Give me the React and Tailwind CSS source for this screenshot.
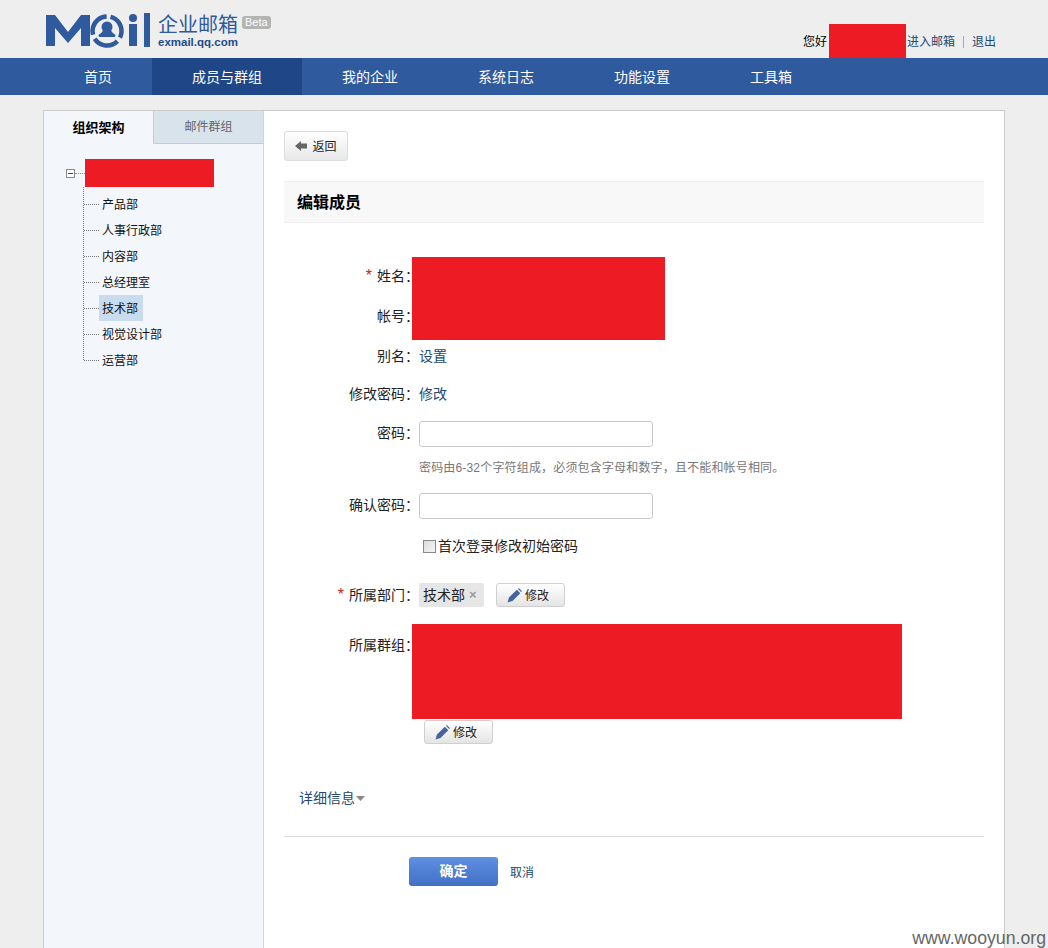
import React from 'react';

const FONT = "font-['Liberation_Sans','Noto_Sans_CJK_SC',sans-serif]";

const navItems = ['首页', '成员与群组', '我的企业', '系统日志', '功能设置', '工具箱'];
const departments = ['产品部', '人事行政部', '内容部', '总经理室', '技术部', '视觉设计部', '运营部'];

const Logo = () => (
  <svg width="106" height="36" viewBox="0 0 106 36" className="block overflow-visible">
    <polygon points="0,33 0,2 9,2 22,19 35,2 44,2 44,33 35,33 35,15 22,30 9,15 9,33" fill="#2f5a9e" />
    <circle
      cx="61"
      cy="18"
      r="14.500"
      fill="none"
      stroke="#2f5a9e"
      strokeWidth="4.500"
      strokeDasharray="26 4.300"
      transform="rotate(-76 61 18)"
    />
    <circle cx="61" cy="14" r="5.500" fill="#2f5a9e" />
    <path d="M57 17h8c.5 2 2.500 3.500 4 4.500 1 .7.5 2.500-1 2.500H54c-1.500 0-2-1.800-1-2.500 1.500-1 3.500-2.500 4-4.500z" fill="#2f5a9e" />
    <circle cx="87" cy="5" r="4" fill="#2f5a9e" />
    <rect x="83" y="11" width="8" height="22" fill="#2f5a9e" />
    <rect x="98" y="0" width="6" height="34" fill="#2f5a9e" />
  </svg>
);

const PencilIcon = () => (
  <svg width="15" height="15" viewBox="0 0 15 15" className="block">
    <polygon points="0.500,14.500 2,9.500 9.800,1.700 13.300,5.200 5.500,13" fill="#46639b" />
    <polygon points="10.800,0.700 12,0.200 14.800,3 14.300,4.200" fill="#46639b" />
  </svg>
);

const EditButton = () => (
  <button className="flex h-[24px] w-[69px] items-center gap-[3px] rounded-[3px] border border-[#d0d0d0] bg-linear-to-b from-white to-[#e4e4e4] pl-[10px] text-[12px] text-[#222]">
    <PencilIcon />
    <span className="pt-px">修改</span>
  </button>
);

const Label = ({ required, children }) => (
  <div className="w-[135px] shrink-0 text-right text-[14px] leading-[20px] text-[#222]">
    {required && <span className="mr-[5px] text-[16px] leading-none text-[#d02020]">*</span>}
    {children}：
  </div>
);

const Input = () => (
  <input type="text" className="h-[26px] w-[234px] rounded-[3px] border border-[#c8c8c8] bg-white" />
);

const App = () => {
  return (
    <div className={`${FONT} relative h-[948px] w-[1048px] overflow-hidden bg-[#eeeeee]`}>
      <header className="flex h-[58px] items-start pl-[46px]">
        <div className="mt-[13px]">
          <Logo />
        </div>
        <div className="ml-[6px] mt-[13px] flex w-[84px] flex-col">
          <span className="text-[20px] leading-[24px] text-[#2f5a9e]">企业邮箱</span>
          <span className="text-[11.500px] font-bold leading-[11px] text-[#1f4a8c]">exmail.qq.com</span>
        </div>
        <span className="mt-[16px] rounded-[3px] bg-[#b4b4b4] px-[3px] text-[11px] leading-[13px] text-white">Beta</span>
        <div className="ml-auto mr-[52px] mt-[24px] flex h-[34px] items-center text-[12px]">
          <span className="mt-[2px] text-black">您好</span>
          <div className="ml-[2px] h-[34px] w-[77px] bg-[#ed1c24]" />
          <a className="ml-[1px] mt-[2px] text-[#24496e]">进入邮箱</a>
          <span className="mx-[8px] mt-[2px] h-[12px] w-px bg-[#aaaaaa]" />
          <a className="mt-[2px] text-[#24496e]">退出</a>
        </div>
      </header>

      <nav className="flex h-[37px] bg-[#2f5a9e] pl-[44px]">
        {navItems.map((item) => (
          <a
            key={item}
            className={`flex items-center px-10 pt-px text-[14px] text-white ${item === '成员与群组' ? 'bg-[#1f4788]' : ''}`}
          >
            {item}
          </a>
        ))}
      </nav>

      <main className="ml-[43px] mt-[15px] flex h-[838px] w-[962px] border border-b-0 border-[#cccccc] bg-white">
        <aside className="w-[220px] shrink-0 border-r border-[#d4d4d4] bg-[#f3f7fb]">
          <div className="flex h-[33px]">
            <div className="flex w-[109px] items-center justify-center text-[13px] font-bold text-black">组织架构</div>
            <div className="flex w-[110px] items-center justify-center rounded-bl-[2px] border-b border-l border-[#c0ccd8] bg-[#d9e3ec] text-[12px] text-[#666]">邮件群组</div>
          </div>

          <div className="ml-[22px] mt-[15px] flex h-[28px] items-center">
            <span className="flex h-[9px] w-[9px] items-center justify-center border border-[#888] bg-white">
              <span className="h-px w-[5px] bg-[#444]" />
            </span>
            <span className="w-[10px] border-t border-dotted border-[#888]" />
            <div className="h-[28px] w-[129px] bg-[#ed1c24]" />
          </div>

          <div className="ml-[39px] flex items-start">
            <div className="h-[173px] border-l border-dotted border-[#777]" />
            <ul className="mt-[4px]">
              {departments.map((d) => (
                <li key={d} className="flex h-[26px] items-center">
                  <span className="w-[15px] border-t border-dotted border-[#777]" />
                  <span className={`flex h-[26px] items-center px-[3px] pt-[2px] text-[12px] text-[#111] ${d === '技术部' ? 'w-[44px] bg-[#c8dcee]' : ''}`}>{d}</span>
                </li>
              ))}
            </ul>
          </div>
        </aside>

        <section className="flex-1 px-5 pt-[20px]">
          <button className="flex h-[30px] w-[64px] items-center justify-center gap-[5px] rounded-[3px] border border-[#dddddd] bg-linear-to-b from-white to-[#e8e8e8] text-[12px] text-[#222]">
            <svg width="12" height="10" viewBox="0 0 12 10" className="block">
              <polygon points="0,5 6,0 6,2.500 12,2.500 12,7.500 6,7.500 6,10" fill="#666666" />
            </svg>
            <span className="pt-px">返回</span>
          </button>

          <div className="mt-[20px] flex h-[42px] items-center border-y border-[#eeeeee] bg-[#f8f8f8] pl-[13px] pt-[2px] text-[16px] font-bold text-black">
            编辑成员
          </div>

          <div className="mt-[34px] flex">
            <div className="w-[128px] shrink-0">
              <div className="mt-[9px]"><Label required>姓名</Label></div>
              <div className="mt-[20px]"><Label>帐号</Label></div>
            </div>
            <div className="relative h-[83px] w-[253px] bg-[#ed1c24]" />
          </div>

          <div className="mt-[6px] flex items-center">
            <Label>别名</Label>
            <a className="text-[14px] leading-[20px] text-[#24496e]">设置</a>
          </div>

          <div className="mt-[18px] flex items-center">
            <Label>修改密码</Label>
            <a className="text-[14px] leading-[20px] text-[#24496e]">修改</a>
          </div>

          <div className="mt-[17px] flex items-center">
            <div className="mb-[2px]"><Label>密码</Label></div>
            <Input />
          </div>

          <p className="ml-[135px] mt-[12px] text-[12px] leading-[18px] tracking-[0.17px] text-[#777]">密码由6-32个字符组成，必须包含字母和数字，且不能和帐号相同。</p>

          <div className="mt-[16px] flex items-center">
            <div className="mb-[2px]"><Label>确认密码</Label></div>
            <Input />
          </div>

          <label className="ml-[139px] mt-[17px] flex h-[20px] items-center text-[14px] text-[#222]">
            <span className="mr-[2px] h-[13px] w-[13px] border border-[#888] bg-linear-to-br from-[#dddddd] to-[#f4f4f4]" />
            首次登录修改初始密码
          </label>

          <div className="mt-[27px] flex h-[24px] items-center">
            <Label required>所属部门</Label>
            <span className="flex h-[24px] w-[65px] items-center rounded-[2px] bg-[#e6e6e6] pl-[4px] text-[14px] text-[#222]">
              技术部
              <span className="ml-[4px] mb-[2px] text-[13px] font-bold leading-none text-[#999]">×</span>
            </span>
            <div className="ml-[12px]"><EditButton /></div>
          </div>

          <div className="mt-[17px] flex">
            <div className="mt-[11px] w-[128px] shrink-0"><Label>所属群组</Label></div>
            <div className="relative h-[95px] w-[490px] bg-[#ed1c24]" />
          </div>

          <div className="ml-[140px] mt-[1px]"><EditButton /></div>

          <div className="ml-[15px] mt-[44px] flex items-center text-[14px] leading-[20px] text-[#24496e]">
            详细信息
            <svg width="9" height="5" viewBox="0 0 9 5" className="ml-[1px] block">
              <polygon points="0,0 9,0 4.500,5" fill="#888888" />
            </svg>
          </div>

          <div className="mt-[28px] border-t border-[#dddddd]" />

          <div className="mt-[20px] flex items-center pl-[125px]">
            <button className="h-[29px] w-[89px] rounded-[3px] bg-linear-to-b from-[#5f8fe2] to-[#4170c4] text-[14px] font-bold text-white">确定</button>
            <a className="ml-[12px] pt-[2px] text-[12px] text-[#24496e]">取消</a>
          </div>
        </section>
      </main>

      <span className="absolute bottom-[0px] right-[2px] font-['Liberation_Sans',sans-serif] text-[17.700px] leading-[20px] text-[#666666]">www.wooyun.org</span>
    </div>
  );
};

export default App;
